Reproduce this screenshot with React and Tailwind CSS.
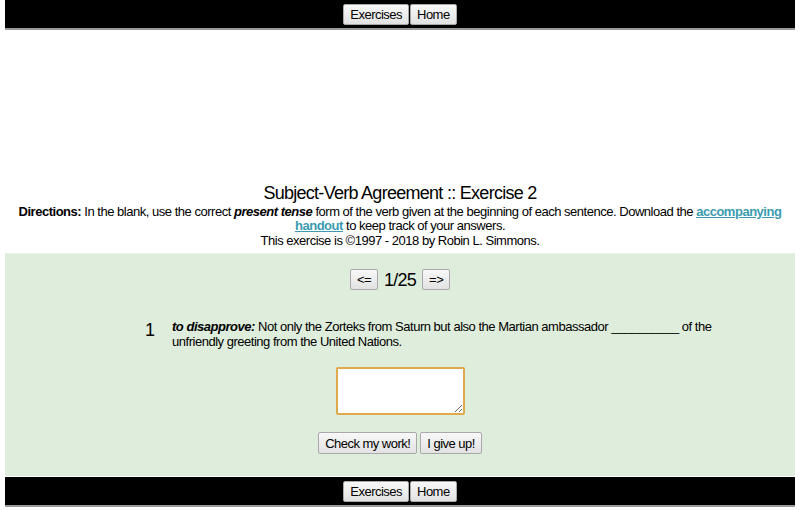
export default function App() {
  const btn =
    "px-[6px] h-[21px] text-[13px] leading-none text-black bg-gradient-to-b from-[#f8f8f8] to-[#e2e2e2] border border-[#a9a9a9] rounded-[2px] tracking-[-0.04em]";
  const Bar = () => (
    <div className="mx-[5px] h-[30px] bg-black border-b-2 border-[#9a9a9a] flex items-center justify-center gap-[1px]">
      <button className={btn}>Exercises</button>
      <button className={btn}>Home</button>
    </div>
  );
  return (
    <div
      className="w-[800px] h-[510px] bg-white text-black overflow-hidden"
      style={{ fontFamily: '"Liberation Sans", Arial, sans-serif' }}
    >
      <Bar />
      <div className="h-[152px]" />
      <div className="text-center tracking-[-0.03em]">
        <h1 className="text-[18px] leading-[22px] tracking-[-0.04em]">Subject-Verb Agreement :: Exercise 2</h1>
        <p className="text-[13px] leading-[14px] px-[10px] pt-[1px]">
          <b>Directions:</b> In the blank, use the correct <b><i>present tense</i></b> form of the verb given at the beginning of each sentence. Download the{" "}
          <a className="text-[#3a9bb0] font-bold underline" href="#">
            accompanying handout
          </a>{" "}
          to keep track of your answers.
        </p>
        <p className="text-[13px] leading-[15px]">This exercise is ©1997 - 2018 by Robin L. Simmons.</p>
      </div>
      <div className="mx-[5px] mt-[5px] h-[223px] bg-[#dfeddc] border-t border-[#e8f2e6]">
        <div className="flex items-center justify-center gap-[6px] pt-[15px]">
          <button className={btn + " w-[28px] px-0"}>&lt;=</button>
          <span className="text-[18px] leading-none tracking-[-0.04em]">1/25</span>
          <button className={btn + " w-[28px] px-0"}>=&gt;</button>
        </div>
        <div className="flex ml-[140px] w-[580px] mt-[29px] tracking-[-0.03em]">
          <div className="w-[27px] text-[18px] leading-[18px] pt-[2px]">1</div>
          <div className="flex-1 text-[13px] leading-[15px]">
            <b><i>to disapprove:</i></b> Not only the Zorteks from Saturn but also the Martian ambassador __________ of the unfriendly greeting from the United Nations.
          </div>
        </div>
        <div className="flex justify-center mt-[18px]">
          <textarea className="w-[129px] h-[48px] bg-white border-2 border-[#e0a94e] rounded-[2px] outline-none resize-y" />
        </div>
        <div className="flex justify-center gap-[3px] mt-[17px]">
          <button className={btn + " h-[22px]"}>Check my work!</button>
          <button className={btn + " h-[22px]"}>I give up!</button>
        </div>
      </div>
      <div className="mt-[1px]">
        <Bar />
      </div>
    </div>
  );
}
